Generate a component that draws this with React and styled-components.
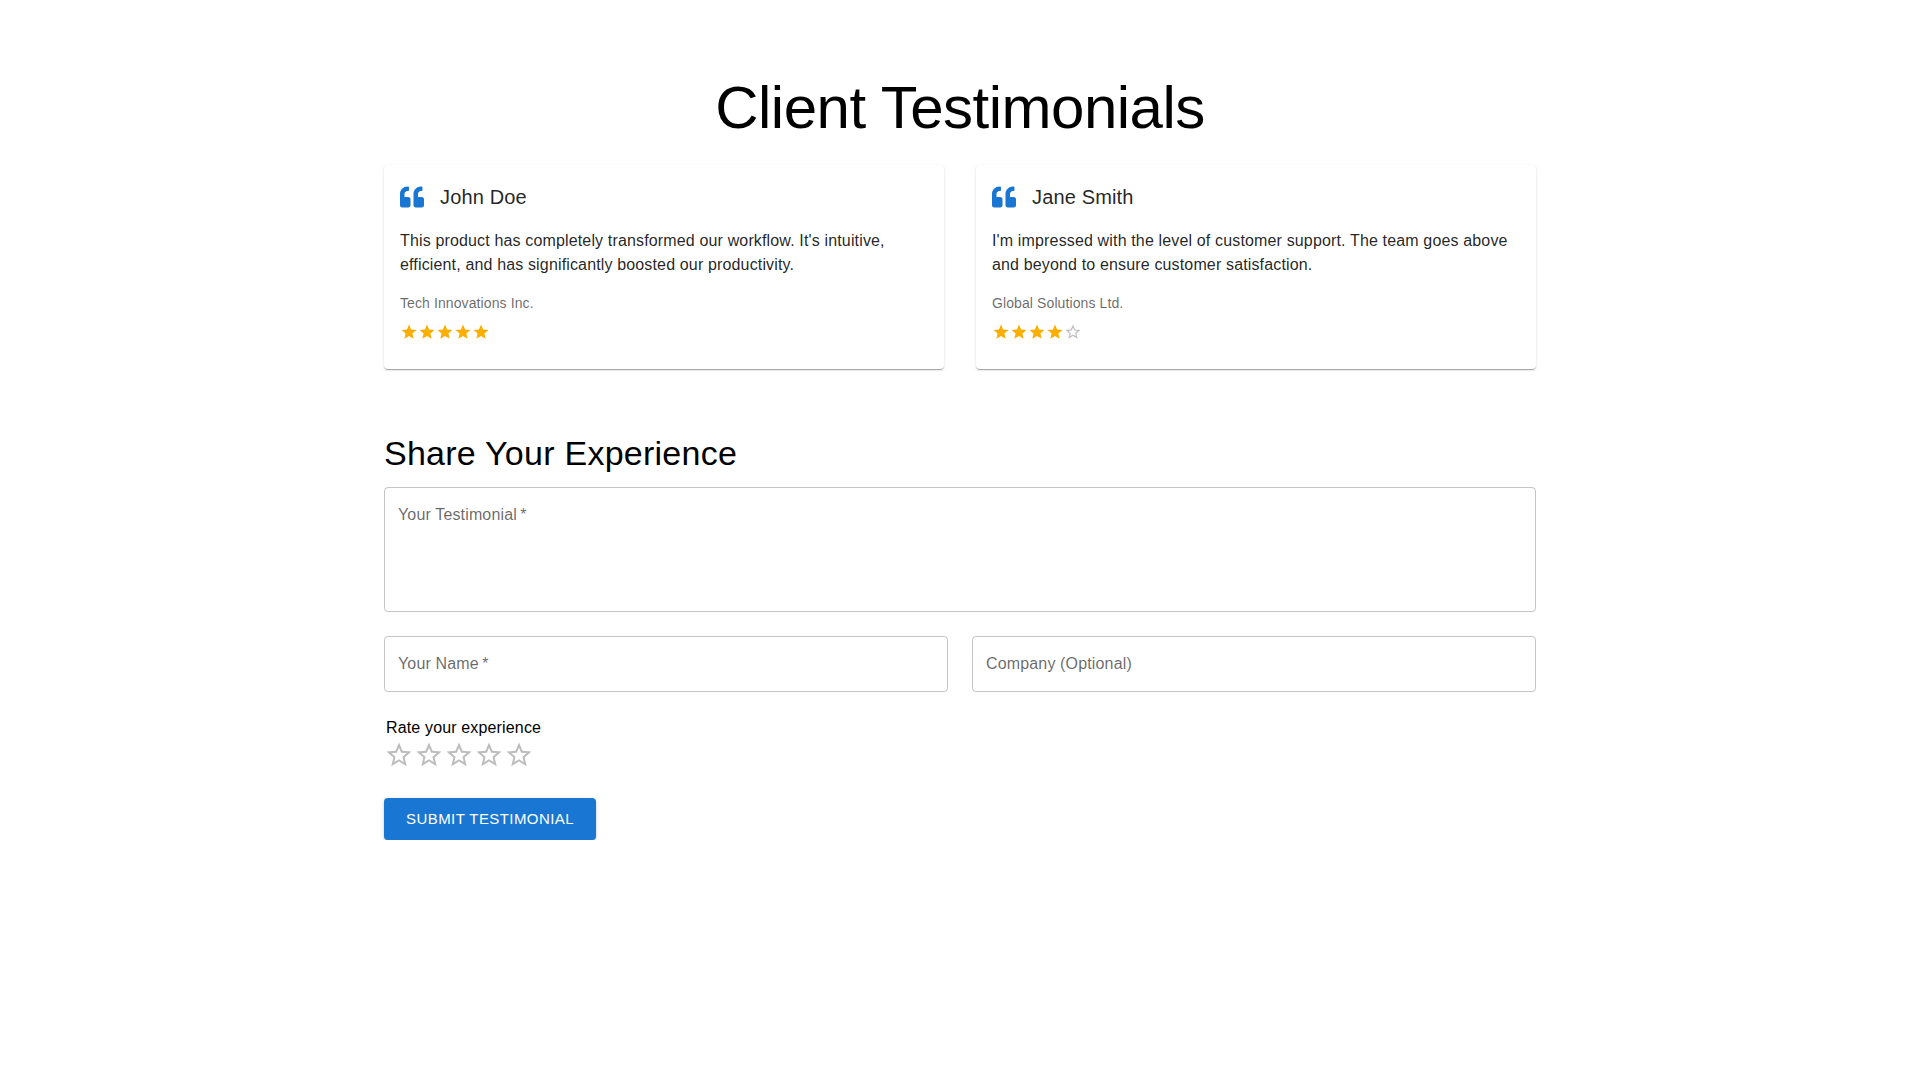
import React from 'react';
import styled, { createGlobalStyle } from 'styled-components';
import { FaQuoteLeft } from 'react-icons/fa';

const FILLED_STAR = 'M12 17.27 18.18 21l-1.64-7.03L22 9.24l-7.19-.61L12 2 9.19 8.63 2 9.24l5.46 4.73L5.82 21z';
const EMPTY_STAR =
  'M22 9.24l-7.19-.62L12 2 9.19 8.63 2 9.24l5.46 4.73L5.82 21 12 17.27 18.18 21l-1.63-7.03L22 9.24zM12 15.4l-3.76 2.27 1-4.28-3.32-2.88 4.38-.38L12 6.1l1.71 4.01 4.38.38-3.32 2.88 1 4.28L12 15.4z';

const testimonials = [
  {
    name: 'John Doe',
    text: "This product has completely transformed our workflow. It's intuitive, efficient, and has significantly boosted our productivity.",
    company: 'Tech Innovations Inc.',
    rating: 5,
  },
  {
    name: 'Jane Smith',
    text: "I'm impressed with the level of customer support. The team goes above and beyond to ensure customer satisfaction.",
    company: 'Global Solutions Ltd.',
    rating: 4,
  },
];

const GlobalStyle = createGlobalStyle`
  html, body {
    margin: 0;
    padding: 0;
    background: #fff;
    font-family: "Liberation Sans", Arial, sans-serif;
  }
`;

const Page = styled.main`
  width: 1152px;
  margin: 0 auto;
  padding-top: 72px;
`;

const Title = styled.h1`
  margin: 0 0 21px;
  font-size: 60px;
  font-weight: 400;
  line-height: 72px;
  text-align: center;
  letter-spacing: -0.5px;
  color: #000;
`;

const CardGrid = styled.section`
  display: grid;
  grid-template-columns: 1fr 1fr;
  gap: 32px;
  margin-bottom: 63px;
`;

const Card = styled.article`
  height: 204px;
  padding: 16px;
  box-sizing: border-box;
  border-radius: 4px;
  background: #fff;
  box-shadow: 0 2px 1px -1px rgba(0, 0, 0, 0.2), 0 1px 1px 0 rgba(0, 0, 0, 0.14), 0 1px 3px 0 rgba(0, 0, 0, 0.12);
`;

const CardHead = styled.div`
  display: flex;
  align-items: center;
  gap: 16px;
  height: 32px;
  margin-bottom: 16px;
  color: #1976d2;
`;

const Name = styled.h3`
  margin: 0;
  font-size: 20px;
  font-weight: 400;
  line-height: 32px;
  letter-spacing: 0.15px;
  color: rgba(0, 0, 0, 0.87);
`;

const Quote = styled.p`
  margin: 0 0 12px;
  font-size: 16px;
  line-height: 24px;
  letter-spacing: 0.15px;
  color: rgba(0, 0, 0, 0.87);
`;

const Company = styled.p`
  margin: 0 0 6px;
  font-size: 14px;
  line-height: 28px;
  letter-spacing: 0.1px;
  color: rgba(0, 0, 0, 0.6);
`;

const Stars = styled.div`
  display: flex;
`;

const StarIcon = styled.svg`
  display: block;
  width: ${({ $size }) => $size}px;
  height: ${({ $size }) => $size}px;
  fill: ${({ $color }) => $color};
`;

const SectionTitle = styled.h2`
  margin: 0 0 13px;
  font-size: 34px;
  font-weight: 400;
  line-height: 42px;
  letter-spacing: 0.25px;
  color: #000;
`;

const Form = styled.form`
  display: flex;
  flex-direction: column;
  gap: 24px;
`;

const Field = styled.label`
  display: block;
  box-sizing: border-box;
  height: ${({ $tall }) => ($tall ? 125 : 56)}px;
  padding: 15px 13px;
  border: 1px solid rgba(0, 0, 0, 0.23);
  border-radius: 4px;
  font-size: 16px;
  line-height: 23px;
  letter-spacing: 0.15px;
  color: rgba(0, 0, 0, 0.6);
`;

const FieldRow = styled.div`
  display: grid;
  grid-template-columns: 1fr 1fr;
  gap: 24px;
`;

const RatingLabel = styled.div`
  padding-left: 2px;
  font-size: 16px;
  line-height: 24px;
  letter-spacing: 0.15px;
  color: #000;
`;

const SubmitButton = styled.button`
  align-self: flex-start;
  height: 42px;
  margin-top: 4px;
  padding: 0 22px;
  border: 0;
  border-radius: 4px;
  background: #1976d2;
  color: #fff;
  font: 500 15px/26px "Liberation Sans", Arial, sans-serif;
  letter-spacing: 0.4286px;
  text-transform: uppercase;
  box-shadow: 0 3px 1px -2px rgba(0, 0, 0, 0.2), 0 2px 2px 0 rgba(0, 0, 0, 0.14), 0 1px 5px 0 rgba(0, 0, 0, 0.12);
`;

const Star = ({ filled, size, color }) => (
  <StarIcon viewBox="0 0 24 24" $size={size} $color={color}>
    <path d={filled ? FILLED_STAR : EMPTY_STAR} />
  </StarIcon>
);

const TestimonialCard = ({ name, text, company, rating }) => (
  <Card>
    <CardHead>
      <FaQuoteLeft size={24} />
      <Name>{name}</Name>
    </CardHead>
    <Quote>{text}</Quote>
    <Company>{company}</Company>
    <Stars>
      {[1, 2, 3, 4, 5].map(n => (
        <Star key={n} filled={n <= rating} size={18} color={n <= rating ? '#faaf00' : 'rgba(0, 0, 0, 0.26)'} />
      ))}
    </Stars>
  </Card>
);

export default function App() {
  return (
    <Page>
      <GlobalStyle />
      <Title>Client Testimonials</Title>
      <CardGrid>
        {testimonials.map(t => (
          <TestimonialCard key={t.name} {...t} />
        ))}
      </CardGrid>
      <SectionTitle>Share Your Experience</SectionTitle>
      <Form onSubmit={e => e.preventDefault()}>
        <Field $tall>Your Testimonial{'\u2009'}*</Field>
        <FieldRow>
          <Field>Your Name{'\u2009'}*</Field>
          <Field>Company (Optional)</Field>
        </FieldRow>
        <div>
          <RatingLabel>Rate your experience</RatingLabel>
          <Stars>
            {[1, 2, 3, 4, 5].map(n => (
              <Star key={n} size={30} color="rgba(0, 0, 0, 0.26)" />
            ))}
          </Stars>
        </div>
        <SubmitButton type="submit">Submit Testimonial</SubmitButton>
      </Form>
    </Page>
  );
}
